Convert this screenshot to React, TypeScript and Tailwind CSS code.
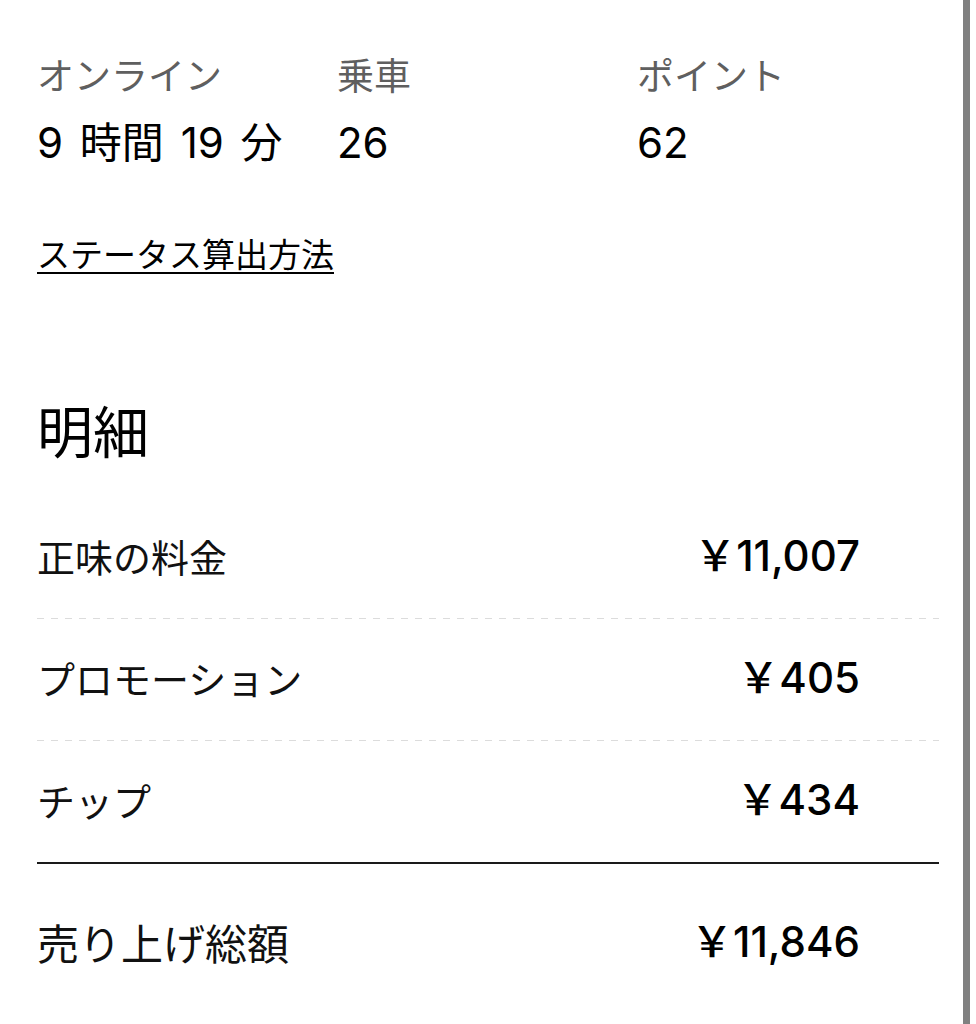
import React from "react";

const jp = { fontFamily: 'Inter, "Noto Sans CJK JP", "Noto Sans", sans-serif' };

const stats = [
  { label: "オンライン", value: "9 時間 19 分" },
  { label: "乗車", value: "26" },
  { label: "ポイント", value: "62" },
];

const rows = [
  { label: "正味の料金", amount: "￥11,007" },
  { label: "プロモーション", amount: "￥405" },
  { label: "チップ", amount: "￥434" },
];

export default function App() {
  return (
    <div className="w-[976px] h-[1024px] bg-white flex overflow-hidden" style={jp}>
      <div className="w-[963px] pl-[37px] pr-[24px]">
        {/* stats */}
        <div className="grid grid-cols-[300px_300px_1fr] pt-[55px]">
          {stats.map((s) => (
            <div key={s.label}>
              <div className="text-[37px] leading-[44px] text-[#5f5f5f]">{s.label}</div>
              <div className="mt-[20px] text-[42px] leading-[48px] text-black [word-spacing:5px]">{s.value}</div>
            </div>
          ))}
        </div>

        <div className="mt-[68px]">
          <a className="text-[33px] leading-[40px] text-black underline underline-offset-[5px] decoration-[2px]">
            ステータス算出方法
          </a>
        </div>

        <h2 className="mt-[126px] text-[56px] leading-[64px] text-black">明細</h2>

        <div className="mt-[32px]">
          {rows.map((r, i) => (
            <div key={r.label}>
              <div className="h-[121px] flex items-center justify-between pr-[79px]">
                <span className="text-[38px] leading-[48px] text-[#111]">{r.label}</span>
                <span className="text-[42px] leading-[48px] mb-[4px] text-black font-medium">{r.amount}</span>
              </div>
              {i < rows.length - 1 ? (
                <div className="h-px bg-[linear-gradient(to_right,#dcdcdc_50%,transparent_50%)] bg-[length:14px_1px]" />
              ) : (
                <div className="h-[2px] bg-[#1a1a1a]" />
              )}
            </div>
          ))}
          <div className="h-[162px] flex items-center justify-between pr-[79px]">
            <span className="text-[42px] leading-[52px] text-[#111]">売り上げ総額</span>
            <span className="text-[42px] leading-[48px] mb-[6px] text-black font-medium">￥11,846</span>
          </div>
        </div>
      </div>
      <div className="w-[7px] bg-[#808080]" />
      <div className="flex-1 bg-white" />
    </div>
  );
}
